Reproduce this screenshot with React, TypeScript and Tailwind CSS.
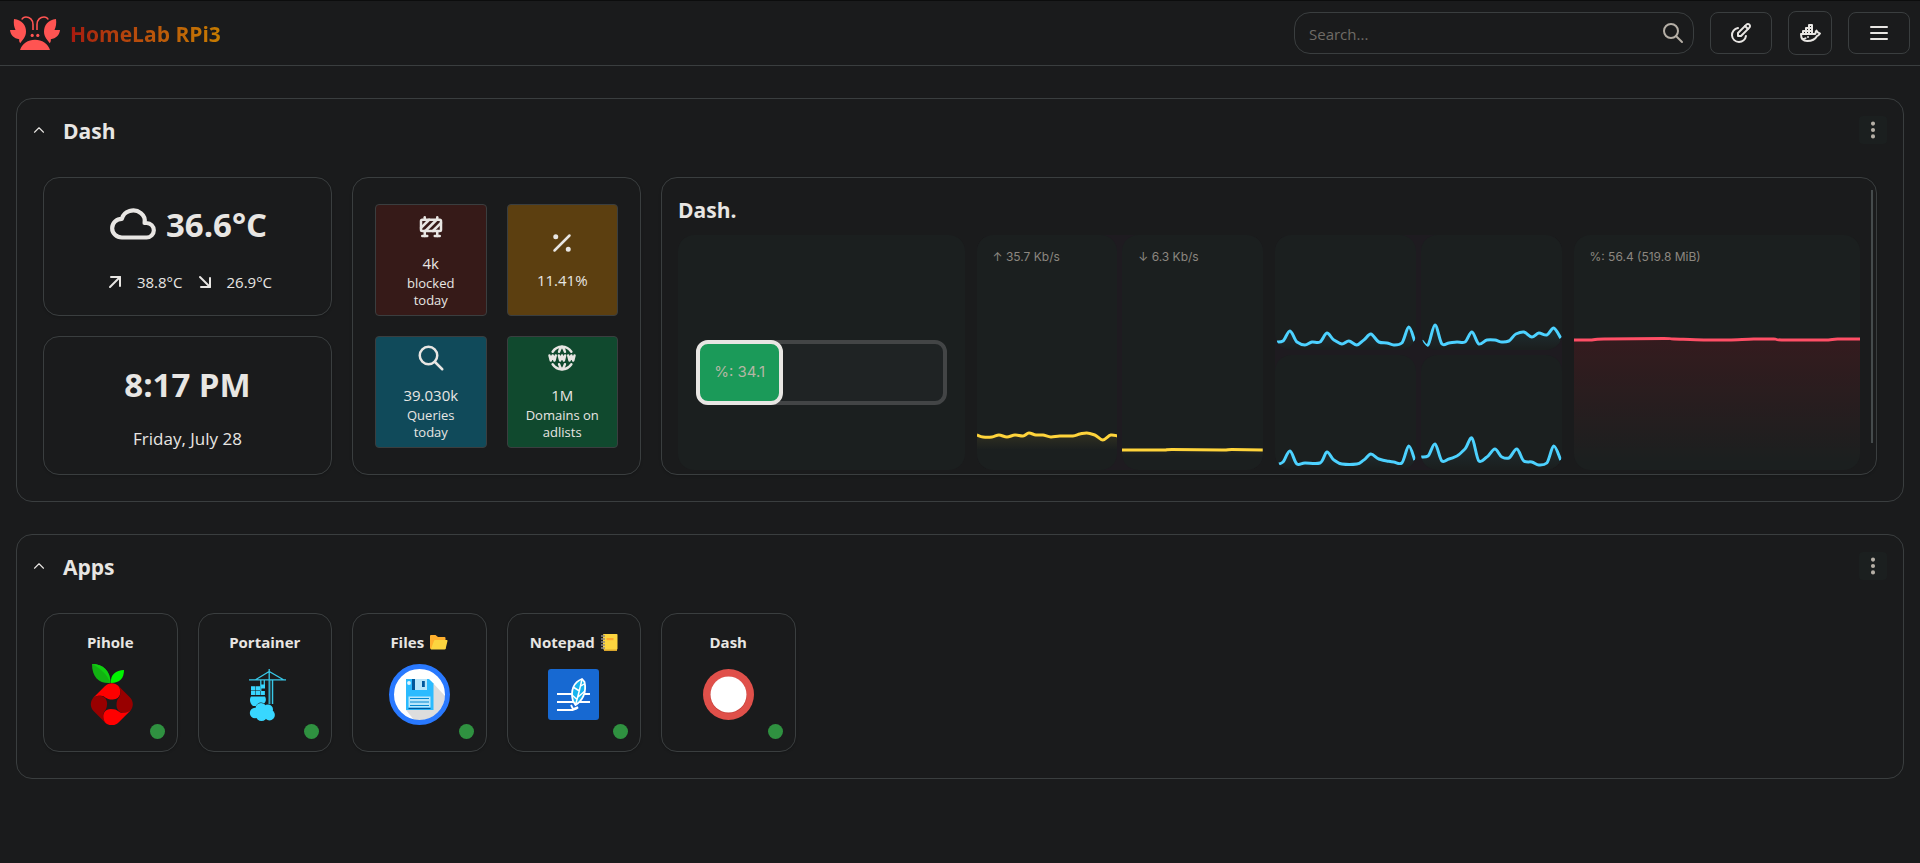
import React, { useId } from 'react';
import {
  TbArrowDownRight,
  TbArrowUpRight,
  TbBarrierBlock,
  TbBrandDocker,
  TbChevronUp,
  TbCloud,
  TbDotsVertical,
  TbEditCircle,
  TbMenu2,
  TbPercentage,
  TbSearch,
  TbWorldWww,
} from 'react-icons/tb';

type Point = [number, number];

function smoothPath(points: Point[]): string {
  let d = `M${points[0][0]} ${points[0][1]}`;
  for (let i = 0; i < points.length - 1; i++) {
    const p0 = points[Math.max(0, i - 1)];
    const p1 = points[i];
    const p2 = points[i + 1];
    const p3 = points[Math.min(points.length - 1, i + 2)];
    const c1 = [p1[0] + (p2[0] - p0[0]) / 6, p1[1] + (p2[1] - p0[1]) / 8];
    const c2 = [p2[0] - (p3[0] - p1[0]) / 6, p2[1] - (p3[1] - p1[1]) / 8];
    d += `C${c1[0]} ${c1[1]} ${c2[0]} ${c2[1]} ${p2[0]} ${p2[1]}`;
  }
  return d;
}

const upload: Point[] = [
  [0, 200], [6, 202], [15, 202], [22, 200], [30, 202], [38, 200], [46, 201], [52, 198], [59, 200], [66, 200],
  [74, 202], [83, 201], [96, 201], [103, 199], [110, 198], [118, 200], [126, 205], [134, 200], [141, 201],
];
const download: Point[] = [[0, 215], [40, 215], [50, 214.6], [100, 215], [110, 214.6], [141, 215]];
const cores: Point[][] = [
  [
    [2, 107], [8, 106], [15, 96], [22, 107], [30, 110], [37, 107], [45, 107], [52, 98], [59, 105], [67, 109],
    [74, 106], [82, 110], [89, 105], [96, 99], [104, 107], [112, 108], [119, 110], [127, 108], [134, 92], [140, 106],
  ],
  [
    [1, 106], [7, 110], [14, 90], [21, 109], [28, 108], [36, 107], [44, 107], [51, 97], [58, 109], [66, 105],
    [74, 105], [81, 107], [88, 106], [95, 99], [103, 97], [111, 102], [118, 98], [126, 100], [133, 93], [140, 103],
  ],
  [
    [4, 109], [8, 107], [15, 96], [22, 109], [30, 108], [45, 108], [52, 97], [59, 105], [67, 109], [82, 109],
    [89, 105], [96, 99], [104, 104], [112, 106], [119, 107], [127, 108], [134, 91], [140, 105],
  ],
  [
    [0, 102], [7, 101], [14, 89], [21, 106], [28, 104], [36, 101], [44, 94], [51, 83], [58, 106], [66, 102],
    [74, 94], [81, 102], [88, 103], [96, 94], [103, 106], [111, 107], [118, 110], [126, 108], [133, 91], [140, 105],
  ],
];
const memory: Point[] = [
  [0, 105], [16, 105], [30, 104], [90, 103.5], [100, 104], [130, 105], [155, 105], [180, 104], [200, 104],
  [208, 105], [250, 105], [264, 104], [287, 104],
];

function Graph({ points, color, width, height, fill = color, fade = 0.1, fadeEnd = 0.95 }: {
  points: Point[]; color: string; width: number; height: number; fill?: string; fade?: number; fadeEnd?: number;
}) {
  const id = useId();
  const line = smoothPath(points);
  const last = points[points.length - 1];
  return (
    <svg className="absolute inset-0 size-full" viewBox={`0 0 ${width} ${height}`} preserveAspectRatio="none" aria-hidden="true">
      <defs>
        <linearGradient id={id} x1="0" y1="0" x2="0" y2="1">
          <stop offset="0" stopColor={fill} stopOpacity={fade} />
          <stop offset={fadeEnd} stopColor={fill} stopOpacity="0" />
        </linearGradient>
      </defs>
      <path d={`${line}L${last[0]} ${height}L${points[0][0]} ${height}Z`} fill={`url(#${id})`} />
      <path d={line} fill="none" stroke={color} strokeWidth="3" vectorEffect="non-scaling-stroke" />
    </svg>
  );
}

function CrabLogo() {
  const side = (
    <>
      <path d="M23 14V8.500C23 3.500 19.500 1 16 1C14 1 12.500 2 11.800 3.500" fill="none" stroke="#ff5452" strokeWidth="1.600" />
      <path d="M4 3C12 4 16 9 16 15.500C16 21 12.500 24 10.200 27.200C9.300 26 9 25 9.200 23.300C4 22.500 .5 19 0 14H5.500C4 11 3.400 7 4 3Z" />
      <circle cx="22.200" cy="19.400" r="1.600" />
    </>
  );
  return (
    <svg className="h-[34px] w-[50px]" viewBox="0 0 50 34" fill="#ff5452" aria-hidden="true">
      <g>{side}</g>
      <g transform="matrix(-1 0 0 1 50 0)">{side}</g>
      <path d="M10 34C12 27.500 18 23.700 25 23.700S38 27.500 40 34Z" />
    </svg>
  );
}

const swirl = 'M-19 -6L-7 -18C-3 -22 3 -22 7 -18C10 -14 9.500 -5 1 -4.700C-7 -4.700 -6 -8.500 -11 -8.500C-14 -8.500 -16.500 -8 -19 -6Z';

function PiholeIcon() {
  return (
    <svg className="h-[61px] w-[46px]" viewBox="-4 0 46 61" aria-hidden="true">
      <path d="M1 0C12 0 19.500 7 19.500 19C9 20 1 14 1 0Z" fill="#12b212" />
      <path d="M1 0C9 4 16 10 19.500 19C19.500 7 12 0 1 0Z" fill="#10cf10" />
      <path d="M20 19C19 11 25 6 33 6C33 14 29 19 20 19Z" fill="#00f500" />
      <g transform="translate(20.8 40.300)">
        <path d={swirl} fill="#f00" />
        <path d={swirl} fill="#980000" transform="rotate(90)" />
        <path d={swirl} fill="#f00" transform="rotate(180)" />
        <path d={swirl} fill="#980000" transform="rotate(270)" />
      </g>
    </svg>
  );
}

function PortainerIcon() {
  return (
    <svg className="h-[52px] w-[43px]" viewBox="-6 0 43 52" fill="#38d7ff" aria-hidden="true">
      <g fill="none" stroke="#38c8e8" strokeWidth="1.300">
        <path d="M0 10.800H37M20.200 0V35M23.600 11V35M6.500 10.800L20.200 2.500L34.500 10.800M11.800 11V22M15.300 11V17" />
        <path d="M21.800 11V35" strokeWidth=".5" />
      </g>
      <path d="M12 15.500h4v4h-4zM2 17.300h4.300v4.200H2zM6.800 17.300h4.300v4.200H6.800zM2 22h4.300v4H2zM6.800 22h4.300v4H6.800zM11.600 22h4.300v4h-4.300z" />
      <path d="M2 27.500H16C17.500 30 17 33 15 34.500C11 32 8 35 7 37L4 37C1 35 0 30 2 27.500Z" />
      <circle cx="6" cy="44" r="5.200" />
      <circle cx="12" cy="39.500" r="5.500" />
      <circle cx="19" cy="40.500" r="5" />
      <circle cx="20.500" cy="46" r="5.400" />
      <circle cx="12.500" cy="46.500" r="5.500" />
    </svg>
  );
}

function FilesIcon() {
  return (
    <svg className="size-[61px]" viewBox="0 0 61 61" aria-hidden="true">
      <circle cx="30.500" cy="30.500" r="28" fill="#fff" />
      <path d="M42 17L56 32A26 26 0 0 1 25 56L17 46Z" fill="#ddd" />
      <circle cx="30.500" cy="30.500" r="28" fill="none" stroke="#2979ff" strokeWidth="5" />
      <path d="M17 15H40L44.500 19.500V46H17Z" fill="#2bbbff" />
      <path d="M25.500 15H38V26H25.500Z" fill="#b8e6fb" />
      <path d="M23 15h3v11h-3zM33 17h2.800v6H33z" fill="#01579b" />
      <circle cx="20" cy="19" r="1.900" fill="#e3f5fd" />
      <path d="M19.500 32.500h22v11h-22z" fill="#b8e6fb" />
      <path d="M21 34.500h19M21 38h19M21 41.500h19" stroke="#0288d1" strokeWidth="1.200" />
      <path d="M19.500 44.500h22" stroke="#01579b" strokeWidth="1.200" />
    </svg>
  );
}

function NotepadIcon() {
  return (
    <svg className="size-[51px]" viewBox="0 0 51 51" aria-hidden="true">
      <rect width="51" height="51" rx="3" fill="#1769d2" />
      <g fill="none" stroke="#fff" strokeWidth="1.800">
        <path d="M9 25H42M9 33H42M9 41H25Q29 40 30 38.500" />
        <path d="M34 10C26 13 22 21 25 32L27.500 36C34 32 39 24 36.500 13Z" fill="#18b5ee" />
        <path d="M34 10C32 20 30 27 27.500 36M31.500 22L25 18M30 28L37 22M33 17L36 15M28.500 30L24 26" strokeWidth="1.500" />
        <path d="M23 36L25 40L30 38" />
      </g>
    </svg>
  );
}

function DashIcon() {
  return (
    <svg className="size-[51px]" viewBox="0 0 51 51" aria-hidden="true">
      <circle cx="25.500" cy="25.500" r="25.500" fill="#e0504a" />
      <circle cx="25.500" cy="26" r="18.500" fill="#c8403b" />
      <circle cx="25.500" cy="25.500" r="18" fill="#fff" />
    </svg>
  );
}

function FolderGlyph() {
  return (
    <svg className="h-[15px] w-[18px]" viewBox="0 0 18 15" aria-hidden="true">
      <path d="M0 1Q0 0 1 0H5.500L8 2H14.500Q15.500 2 15.500 3V14H1Q0 14 0 13Z" fill="#ffb02e" />
      <path d="M5 5H16.800Q17.700 5 17.500 6L15.700 13.500Q15.500 14.500 14.500 14.500H.8L4 5.700Q4.300 5 5 5Z" fill="#fcd53f" />
    </svg>
  );
}

function NotebookGlyph() {
  return (
    <svg className="h-[17px] w-[17px]" viewBox="0 0 17 17" aria-hidden="true">
      <path d="M3 1h13v16H3z" fill="#d9a52c" />
      <rect x="2" width="14.500" height="15.500" rx=".7" fill="#fcd53f" />
      <path d="M5.500 4h7v2.200h-7z" fill="#ffa82e" />
      <path d="M0 2h4M0 5h4M0 8h4M0 11h4M0 14h4" stroke="#8f8a88" strokeWidth="1.300" />
    </svg>
  );
}

function Section({ title, children }: { title: string; children: React.ReactNode }) {
  return (
    <section className="rounded-2xl border border-[#3a3e3f] px-[26px] pt-4 pb-[26px]">
      <div className="mb-8 flex h-[30px] items-center">
        <button type="button" aria-label={`Collapse ${title}`} className="-ml-4 flex w-6 justify-center">
          <TbChevronUp size={18} strokeWidth={1.5} />
        </button>
        <h2 className="ml-3 pt-[2px] text-[21px] leading-7 font-bold">{title}</h2>
        <button type="button" aria-label={`${title} options`} className="-mr-[10px] ml-auto flex size-7 items-center justify-center rounded bg-[#1b1f1f] text-[#b5afa6]">
          <TbDotsVertical size={22} strokeWidth={2.5} />
        </button>
      </div>
      {children}
    </section>
  );
}

const card = 'rounded-2xl border border-[#3a3e3f] shadow-sm';

function StatTile({ icon, value, label, tone }: { icon: React.ReactNode; value: string; label?: string; tone: string }) {
  return (
    <div className={`flex h-28 flex-col items-center justify-center rounded-sm border border-[#3a3e3f] text-center ${tone}`}>
      {icon}
      <div className="mt-[10px] text-[15px] leading-6">{value}</div>
      {label && <div className="w-20 text-[13px] leading-[17px]">{label}</div>}
    </div>
  );
}

function Panel({ label, children }: { label?: string; children?: React.ReactNode }) {
  return (
    <div className="relative min-w-0 flex-1 overflow-hidden rounded-2xl bg-[#1b1f1f]">
      {label && <div className="px-4 pt-[14px] font-['Inter',sans-serif] text-xs leading-4 text-[#8c8780]">{label}</div>}
      {children}
    </div>
  );
}

const apps = [
  { name: 'Pihole', icon: <PiholeIcon /> },
  { name: 'Portainer', icon: <PortainerIcon /> },
  { name: 'Files', glyph: <FolderGlyph />, icon: <FilesIcon /> },
  { name: 'Notepad', glyph: <NotebookGlyph />, icon: <NotepadIcon /> },
  { name: 'Dash', icon: <DashIcon /> },
];

export default function App() {
  return (
    <div className="min-h-screen bg-[#1a1b1c] font-['Open_Sans','Noto_Sans',sans-serif] text-[#e8e6e3]">
      <header className="flex h-[66px] items-center border-t border-b border-t-[#0c0d0d] border-b-[#3a3e3f] px-[10px]">
        <a href="#home" className="flex items-center gap-[10px]">
          <CrabLogo />
          <span className="bg-linear-to-r from-[#a8180f] to-[#c67c00] bg-clip-text pt-[2px] text-[21px] leading-7 font-bold text-transparent">
            HomeLab RPi3
          </span>
        </a>
        <div className="ml-auto flex items-center gap-4">
          <label className="flex h-[42px] w-[400px] items-center rounded-2xl border border-[#3a3e3f] pr-2 pl-[14px]">
            <input
              type="search"
              aria-label="Search"
              placeholder="Search..."
              className="min-w-0 flex-1 bg-transparent pt-[2px] text-[15px] outline-none placeholder:text-[#6f6b66]"
            />
            <TbSearch size={24} strokeWidth={2} className="text-[#b5afa6]" />
          </label>
          <button type="button" aria-label="Edit" className="flex h-[42px] w-[62px] items-center justify-center rounded-lg border border-[#3a3e3f]">
            <TbEditCircle size={24} />
          </button>
          <button type="button" aria-label="Docker" className="flex size-11 items-center justify-center rounded-lg border border-[#3a3e3f]">
            <TbBrandDocker size={24} />
          </button>
          <button type="button" aria-label="Menu" className="flex h-[42px] w-[62px] items-center justify-center rounded-lg border border-[#3a3e3f]">
            <TbMenu2 size={24} />
          </button>
        </div>
      </header>

      <main className="flex flex-col gap-8 px-4 py-8">
        <Section title="Dash">
          <div className="grid grid-cols-12 grid-rows-[139px_139px] gap-5">
            <div className={`${card} col-span-2 flex flex-col items-center justify-center gap-5`}>
              <div className="flex items-center gap-2">
                <TbCloud size={50} />
                <span className="text-[33px] leading-[48px] font-bold">36.6°C</span>
              </div>
              <div className="flex items-center gap-[10px] text-[15px] leading-6">
                <TbArrowUpRight size={24} />
                <span>38.8°C</span>
                <TbArrowDownRight size={24} />
                <span>26.9°C</span>
              </div>
            </div>

            <div className={`${card} col-span-2 row-span-2 grid grid-cols-2 content-center gap-5 px-[22px]`}>
              <StatTile tone="bg-[#361a18]" icon={<TbBarrierBlock size={30} />} value="4k" label="blocked today" />
              <StatTile tone="bg-[#5c3f10]" icon={<TbPercentage size={30} />} value="11.41%" />
              <StatTile tone="bg-[#104a5a]" icon={<TbSearch size={30} />} value="39.030k" label="Queries today" />
              <StatTile tone="bg-[#10492e]" icon={<TbWorldWww size={30} />} value="1M" label="Domains on adlists" />
            </div>

            <div className={`${card} relative col-span-8 row-span-2 flex flex-col px-4 pt-[18px] pb-1`}>
              <h3 className="mb-[10px] text-[21px] leading-[29px] font-bold">Dash.</h3>
              <div className="grid flex-1 grid-cols-4 gap-3">
                <div className="flex flex-col">
                  <Panel>
                    <div className="flex h-full items-center px-[18px]">
                      <div className="mt-10 h-[65px] w-full rounded-xl border-4 border-[#434546] bg-[#1f2324]">
                        <div className="-m-1 flex h-[65px] w-[36%] items-center justify-center rounded-xl border-4 border-[#e8e6e3] bg-[#1b9a59] font-['Inter',sans-serif] text-[15px] text-[#b5b6a4]">
                          %: 34.1
                        </div>
                      </div>
                    </div>
                  </Panel>
                </div>
                <div className="flex gap-[5px] rounded-2xl bg-[#1e1b20]">
                  <Panel label="↑ 35.7 Kb/s">
                    <Graph points={upload} color="#ffd43b" width={141} height={235} fadeEnd={0.45} />
                  </Panel>
                  <Panel label="↓ 6.3 Kb/s">
                    <Graph points={download} color="#ffd43b" width={141} height={235} fade={0.03} fadeEnd={0.4} />
                  </Panel>
                </div>
                <div className="flex flex-col gap-[5px] rounded-2xl bg-[#1e1b20]">
                  {[cores.slice(0, 2), cores.slice(2)].map((row, r) => (
                    <div key={r} className="flex flex-1 gap-[5px]">
                      {row.map((points, i) => (
                        <Panel key={i}>
                          <Graph points={points} color="#4dd2ff" width={141} height={115} />
                        </Panel>
                      ))}
                    </div>
                  ))}
                </div>
                <div className="flex">
                  <Panel label="%: 56.4 (519.8 MiB)">
                    <Graph points={memory} color="#ff4f66" fill="#e0001a" fade={0.13} width={287} height={235} />
                  </Panel>
                </div>
              </div>
              <div className="absolute top-3 right-[3px] h-[253px] w-[2px] bg-[#454b4c]" />
            </div>

            <div className={`${card} col-span-2 row-start-2 flex flex-col items-center justify-center gap-[10px]`}>
              <span className="text-[33px] leading-[48px] font-bold">8:17 PM</span>
              <span className="pt-2 text-[17px] leading-6">Friday, July 28</span>
            </div>
          </div>
        </Section>

        <Section title="Apps">
          <div className="grid grid-cols-12 gap-5">
            {apps.map((app) => (
              <a key={app.name} href={`#${app.name.toLowerCase()}`} className={`${card} relative flex h-[139px] flex-col items-center pt-4`}>
                <span className="flex items-center gap-[6px] text-[15px] leading-6 font-bold">
                  {app.name}
                  {app.glyph}
                </span>
                <span className="mt-[10px] flex h-[61px] items-center justify-center">{app.icon}</span>
                <span className="absolute right-3 bottom-3 size-[15px] rounded-full bg-[#2f9140]" />
              </a>
            ))}
          </div>
        </Section>
      </main>
    </div>
  );
}
